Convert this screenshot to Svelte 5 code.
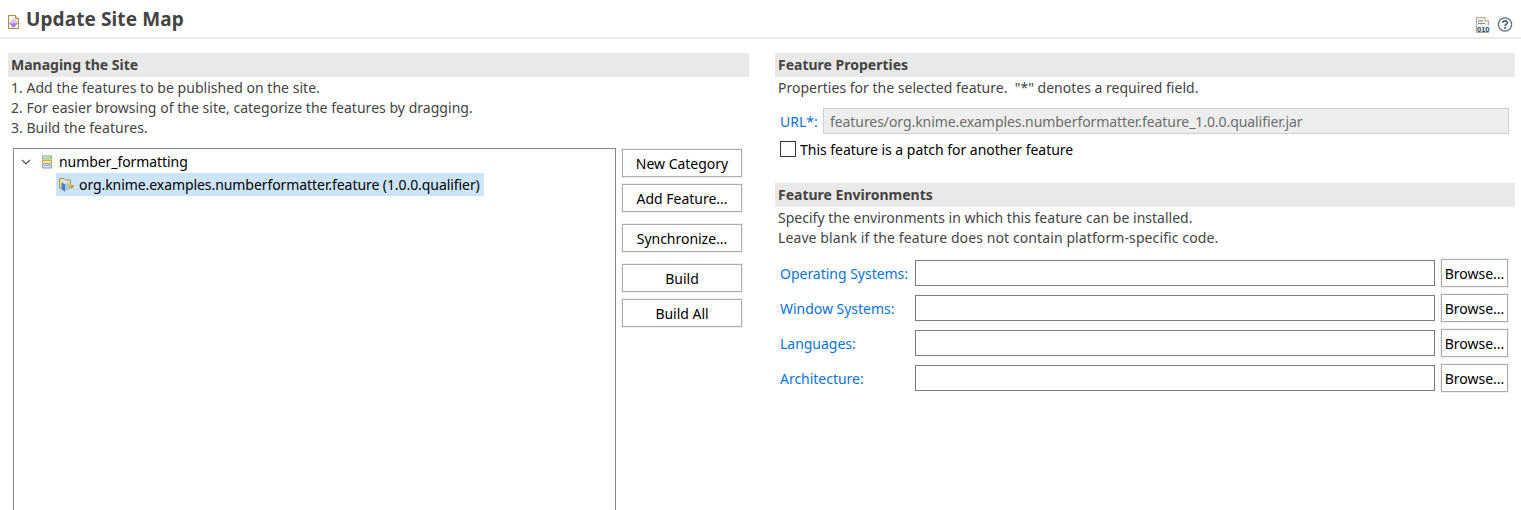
<script>
	const steps = [
		'1. Add the features to be published on the site.',
		'2. For easier browsing of the site, categorize the features by dragging.',
		'3. Build the features.'
	];
	const envs = ['Operating Systems:', 'Window Systems:', 'Languages:', 'Architecture:'];
</script>

<div class="page">
	<header class="top">
		<div class="title">
			<svg class="site-icon" width="13" height="15" viewBox="0 0 13 15">
				<path d="M1.5 .5H8.5L11.5 3.5V13.5H1.5Z" fill="#fdf8e8" stroke="#a88a48" />
				<path d="M8.5 .5V3.5H11.5" fill="#efe3bd" stroke="#a88a48" />
				<path d="M6.5 3.5L11 8.2L6.5 13L2 8.2Z" fill="#ad7fdc" />
				<path d="M6.5 3.5L11 8.2H2Z" fill="#dcc4f4" />
			</svg>
			<h1>Update Site Map</h1>
		</div>
		<div class="tools">
			<svg width="14" height="16" viewBox="0 0 14 16">
				<path d="M.5 .5H9L12.5 4V15.5H.5Z" fill="#f4efd6" stroke="#a9a9a0" />
				<path d="M9 .5V4H12.5" fill="#fff" stroke="#a9a9a0" />
				<path d="M2 4H7M2 6.5H9" stroke="#6a8fc0" />
				<rect x="1" y="8" width="13" height="7" fill="#f8f8f0" />
				<text x="1" y="14.8" class="bin">010</text>
			</svg>
			<svg width="16" height="16" viewBox="0 0 16 16">
				<circle cx="8" cy="7.5" r="6.6" fill="#fff" stroke="#5d7183" stroke-width="1.3" />
				<path d="M5.8 5.8C5.8 3.2 10.3 3.2 10.3 5.7C10.3 7.3 8 7.3 8 9.1" fill="none" stroke="#4c6377" stroke-width="1.7" />
				<rect x="7.1" y="10.1" width="1.8" height="1.8" fill="#4c6377" />
			</svg>
		</div>
	</header>

	<main class="columns">
		<section class="left">
			<h2>Managing the Site</h2>
			<div class="steps">
				{#each steps as step}
					<p>{step}</p>
				{/each}
			</div>
			<div class="manage">
				<div class="tree">
					<div class="node">
						<svg class="chevron" width="10" height="6" viewBox="0 0 10 6">
							<path d="M1 1L5 5L9 1" fill="none" stroke="#555" stroke-width="1.2" />
						</svg>
						<svg class="cat-icon" width="12" height="14" viewBox="0 0 12 14">
							<rect x="1.5" y="1" width="9" height="3" fill="#d3e8bd" stroke="#8fae70" />
							<rect x="1.5" y="5.5" width="9" height="3" fill="#f6e8ae" stroke="#c8aa50" />
							<rect x="1.5" y="10" width="9" height="3" fill="#d3e1f5" stroke="#7d9bc8" />
						</svg>
						<span>number_formatting</span>
					</div>
					<div class="node child">
						<div class="selected">
							<svg width="17" height="17" viewBox="0 0 17 17">
								<path d="M1.5 2.5H6L7.5 4H12.5V12H1.5Z" fill="#f3dfa8" stroke="#a88f5a" />
								<path d="M3.5 6L7 8V15.5L3.5 13.5Z" fill="#4f80bd" />
								<path d="M7 8L10.5 6V13.5L7 15.5Z" fill="#a6c8ee" />
								<path d="M3.5 6L7 4.5L10.5 6L7 8Z" fill="#dbe9f8" />
								<path d="M10.5 10H16M14 10V12.5" stroke="#c2951c" stroke-width="1.6" fill="none" />
								<circle cx="11.5" cy="10" r="1.6" fill="#e9c04a" />
							</svg>
							<span>org.knime.examples.numberformatter.feature (1.0.0.qualifier)</span>
						</div>
					</div>
				</div>
				<div class="actions">
					<button>New Category</button>
					<button>Add Feature...</button>
					<button class="spaced">Synchronize...</button>
					<button class="spaced">Build</button>
					<button>Build All</button>
				</div>
			</div>
		</section>

		<section class="right">
			<h2>Feature Properties</h2>
			<p class="desc">Properties for the selected feature.&nbsp; "*" denotes a required field.</p>
			<div class="url-row">
				<a href="#url" class="link url-label">URL*:</a>
				<input class="url" disabled value="features/org.knime.examples.numberformatter.feature_1.0.0.qualifier.jar" />
			</div>
			<label class="patch">
				<span class="box"></span>
				This feature is a patch for another feature
			</label>

			<h2 class="env-head">Feature Environments</h2>
			<p class="desc">Specify the environments in which this feature can be installed.</p>
			<p class="desc wide">Leave blank if the feature does not contain platform-specific code.</p>
			<div class="envs">
				{#each envs as env}
					<div class="env-row">
						<a href="#env" class="link env-label">{env}</a>
						<input class="env-input" />
						<button class="browse">Browse...</button>
					</div>
				{/each}
			</div>
		</section>
	</main>
</div>

<style>
	:global(body) {
		background: #fff;
	}

	.page {
		height: 510px;
		overflow: hidden;
		font-family: "Noto Sans", "Open Sans", sans-serif;
		font-size: 14px;
		letter-spacing: -0.02px;
		color: #000;
	}

	.top {
		height: 37px;
		border-bottom: 2px solid #e9e9e9;
		display: flex;
		justify-content: space-between;
		box-sizing: content-box;
	}

	.title {
		display: flex;
		align-items: flex-start;
		padding: 6px 0 0 7px;
		gap: 6px;
	}

	.site-icon {
		margin-top: 9px;
	}

	h1 {
		margin: 0;
		font-size: 19px;
		line-height: 26px;
		font-weight: 700;
		color: #444;
		letter-spacing: 0.1px;
	}

	.tools {
		display: flex;
		gap: 7px;
		padding: 17px 8px 0 0;
	}

	.bin {
		font-family: "Liberation Sans", sans-serif;
		font-size: 7.5px;
		font-weight: 700;
		fill: #24466e;
		letter-spacing: 0;
	}

	.columns {
		display: flex;
		padding: 14px 6px 0 8px;
		gap: 26px;
	}

	.left {
		width: 741px;
	}

	.right {
		width: 740px;
	}

	h2 {
		margin: 0;
		height: 24px;
		line-height: 23px;
		padding-left: 3px;
		background: #e9e9e9;
		font-size: 14px;
		font-weight: 700;
		color: #444;
		letter-spacing: 0;
	}

	p {
		margin: 0;
		line-height: 20px;
		color: #444;
	}

	.steps {
		padding: 1px 0 0 3px;
		height: 71px;
		box-sizing: border-box;
		letter-spacing: 0.03px;
	}

	.manage {
		display: flex;
		align-items: flex-start;
		gap: 6px;
	}

	.tree {
		margin-left: 5px;
		width: 603px;
		height: 400px;
		box-sizing: border-box;
		border: 1px solid #828790;
		padding-top: 1px;
		flex: none;
	}

	.node {
		display: flex;
		align-items: center;
		height: 23px;
		letter-spacing: -0.07px;
	}

	.chevron {
		margin-left: 7px;
		margin-right: 10px;
	}

	.cat-icon {
		margin-right: 6px;
	}

	.child {
		padding-left: 42px;
	}

	.selected {
		display: flex;
		align-items: center;
		gap: 4px;
		height: 23px;
		padding: 0 4px 0 2px;
		background: #cce5fb;
	}

	.actions {
		display: flex;
		flex-direction: column;
		gap: 7px;
		padding-top: 1px;
	}

	button {
		font: inherit;
		letter-spacing: inherit;
		color: #000;
		background: #fff;
		border: 1px solid #adadad;
		outline: 1px solid #f0f0f0;
		padding: 0;
		width: 120px;
		height: 28px;
	}

	.actions .spaced {
		margin-top: 5px;
	}

	.desc {
		padding-left: 3px;
		letter-spacing: 0.01px;
	}

	.desc.wide {
		letter-spacing: 0.1px;
	}

	.right > .desc:first-of-type {
		margin-top: 1px;
	}

	.url-row {
		display: flex;
		align-items: center;
		margin-top: 10px;
		padding-left: 5px;
	}

	.link {
		color: #0a74d8;
		text-decoration: none;
	}

	.url-label {
		width: 43px;
	}

	.url {
		width: 686px;
		height: 26px;
		box-sizing: border-box;
		font: inherit;
		letter-spacing: -0.07px;
		padding: 0 6px;
		color: #6d6d6d;
		background: #eeeeee;
		border: 1px solid #cfcfcf;
	}

	.patch {
		display: flex;
		align-items: center;
		gap: 4px;
		margin-top: 6px;
		padding-left: 5px;
		height: 18px;
	}

	.box {
		width: 16px;
		height: 16px;
		box-sizing: border-box;
		border: 1px solid #333;
	}

	.env-head {
		margin-top: 25px;
		margin-bottom: 1px;
	}

	.envs {
		margin-top: 12px;
		display: flex;
		flex-direction: column;
		gap: 9px;
	}

	.env-row {
		display: flex;
		align-items: center;
		height: 26px;
		padding-left: 5px;
	}

	.env-label {
		width: 135px;
		white-space: nowrap;
	}

	.env-input {
		width: 520px;
		height: 26px;
		box-sizing: border-box;
		border: 1px solid #7a7a7a;
		background: #fff;
		padding: 0;
	}

	.browse {
		width: 67px;
		margin-left: 6px;
	}
</style>
